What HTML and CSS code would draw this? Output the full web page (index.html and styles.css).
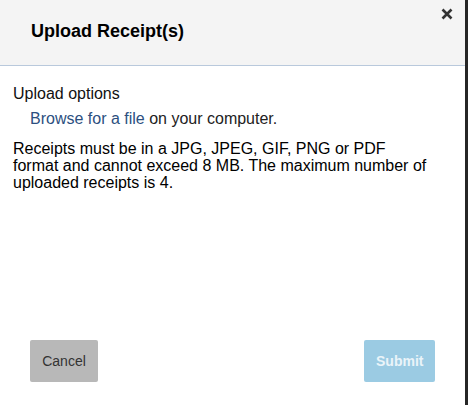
FILE: index.html
```html
<!DOCTYPE html>
<html lang="en">
<head>
<meta charset="utf-8">
<title>Upload Receipt(s)</title>
<link rel="stylesheet" href="styles.css">
</head>
<body>
<div class="modal">
  <div class="modal-header">
    <h2 class="modal-title">Upload Receipt(s)</h2>
    <button class="close" aria-label="Close">
      <svg width="12" height="12" viewBox="0 0 12 12"><path d="M1.5 1.5 L10.5 10.5 M10.5 1.5 L1.5 10.5" stroke="#333" stroke-width="2.6" stroke-linecap="butt" fill="none"/></svg>
    </button>
  </div>
  <div class="modal-body">
    <div class="label">Upload options</div>
    <div class="option"><a href="#" class="link">Browse for a file</a> on your computer.</div>
    <p class="note">Receipts must be in a JPG, JPEG, GIF, PNG or PDF<br>format and cannot exceed 8 MB. The maximum number of uploaded receipts is 4.</p>
  </div>
  <div class="modal-footer">
    <button class="btn btn-cancel">Cancel</button>
    <button class="btn btn-submit" disabled>Submit</button>
  </div>
</div>
</body>
</html>
```
FILE: styles.css
```css
html, body {
  margin: 0;
  padding: 0;
}
body {
  width: 468px;
  height: 405px;
  background: #262626;
  font-family: "Liberation Sans", Arial, sans-serif;
  overflow: hidden;
}
.modal {
  position: relative;
  width: 465px;
  height: 405px;
  background: #fff;
  display: flex;
  flex-direction: column;
}
.modal-header {
  box-sizing: border-box;
  height: 66px;
  background: #f4f4f4;
  border-bottom: 1px solid #b9c9dc;
  padding: 21px 31px 0;
}
.modal-title {
  margin: 0;
  font-size: 18px;
  font-weight: bold;
  color: #000;
  line-height: 21px;
}
.close {
  position: absolute;
  top: 8px;
  right: 12px;
  border: 0;
  background: none;
  padding: 0;
  width: 12px;
  height: 12px;
  display: flex;
}
.modal-body {
  flex: 1;
  padding: 19px 13px 0;
  font-size: 16px;
  line-height: 17px;
  color: #111;
}
.label {
  margin: 0;
}
.option {
  margin-top: 8px;
  padding-left: 17px;
  color: #222;
}
.link {
  color: #2c4f80;
  text-decoration: none;
}
.note {
  margin: 13px 0 0;
  color: #000;
}
.modal-footer {
  display: flex;
  justify-content: space-between;
  padding: 0 30px 23px;
}
.btn {
  box-sizing: border-box;
  height: 42px;
  border: 0;
  border-radius: 2px;
  padding: 0 12px;
  font-family: "Liberation Sans", Arial, sans-serif;
  font-size: 14px;
}
.btn-cancel {
  width: 68px;
  background: #b8b8b8;
  color: #333;
}
.btn-submit {
  width: 71px;
  background: #9bcbe3;
  color: #eaf4f9;
  font-weight: bold;
}
```
